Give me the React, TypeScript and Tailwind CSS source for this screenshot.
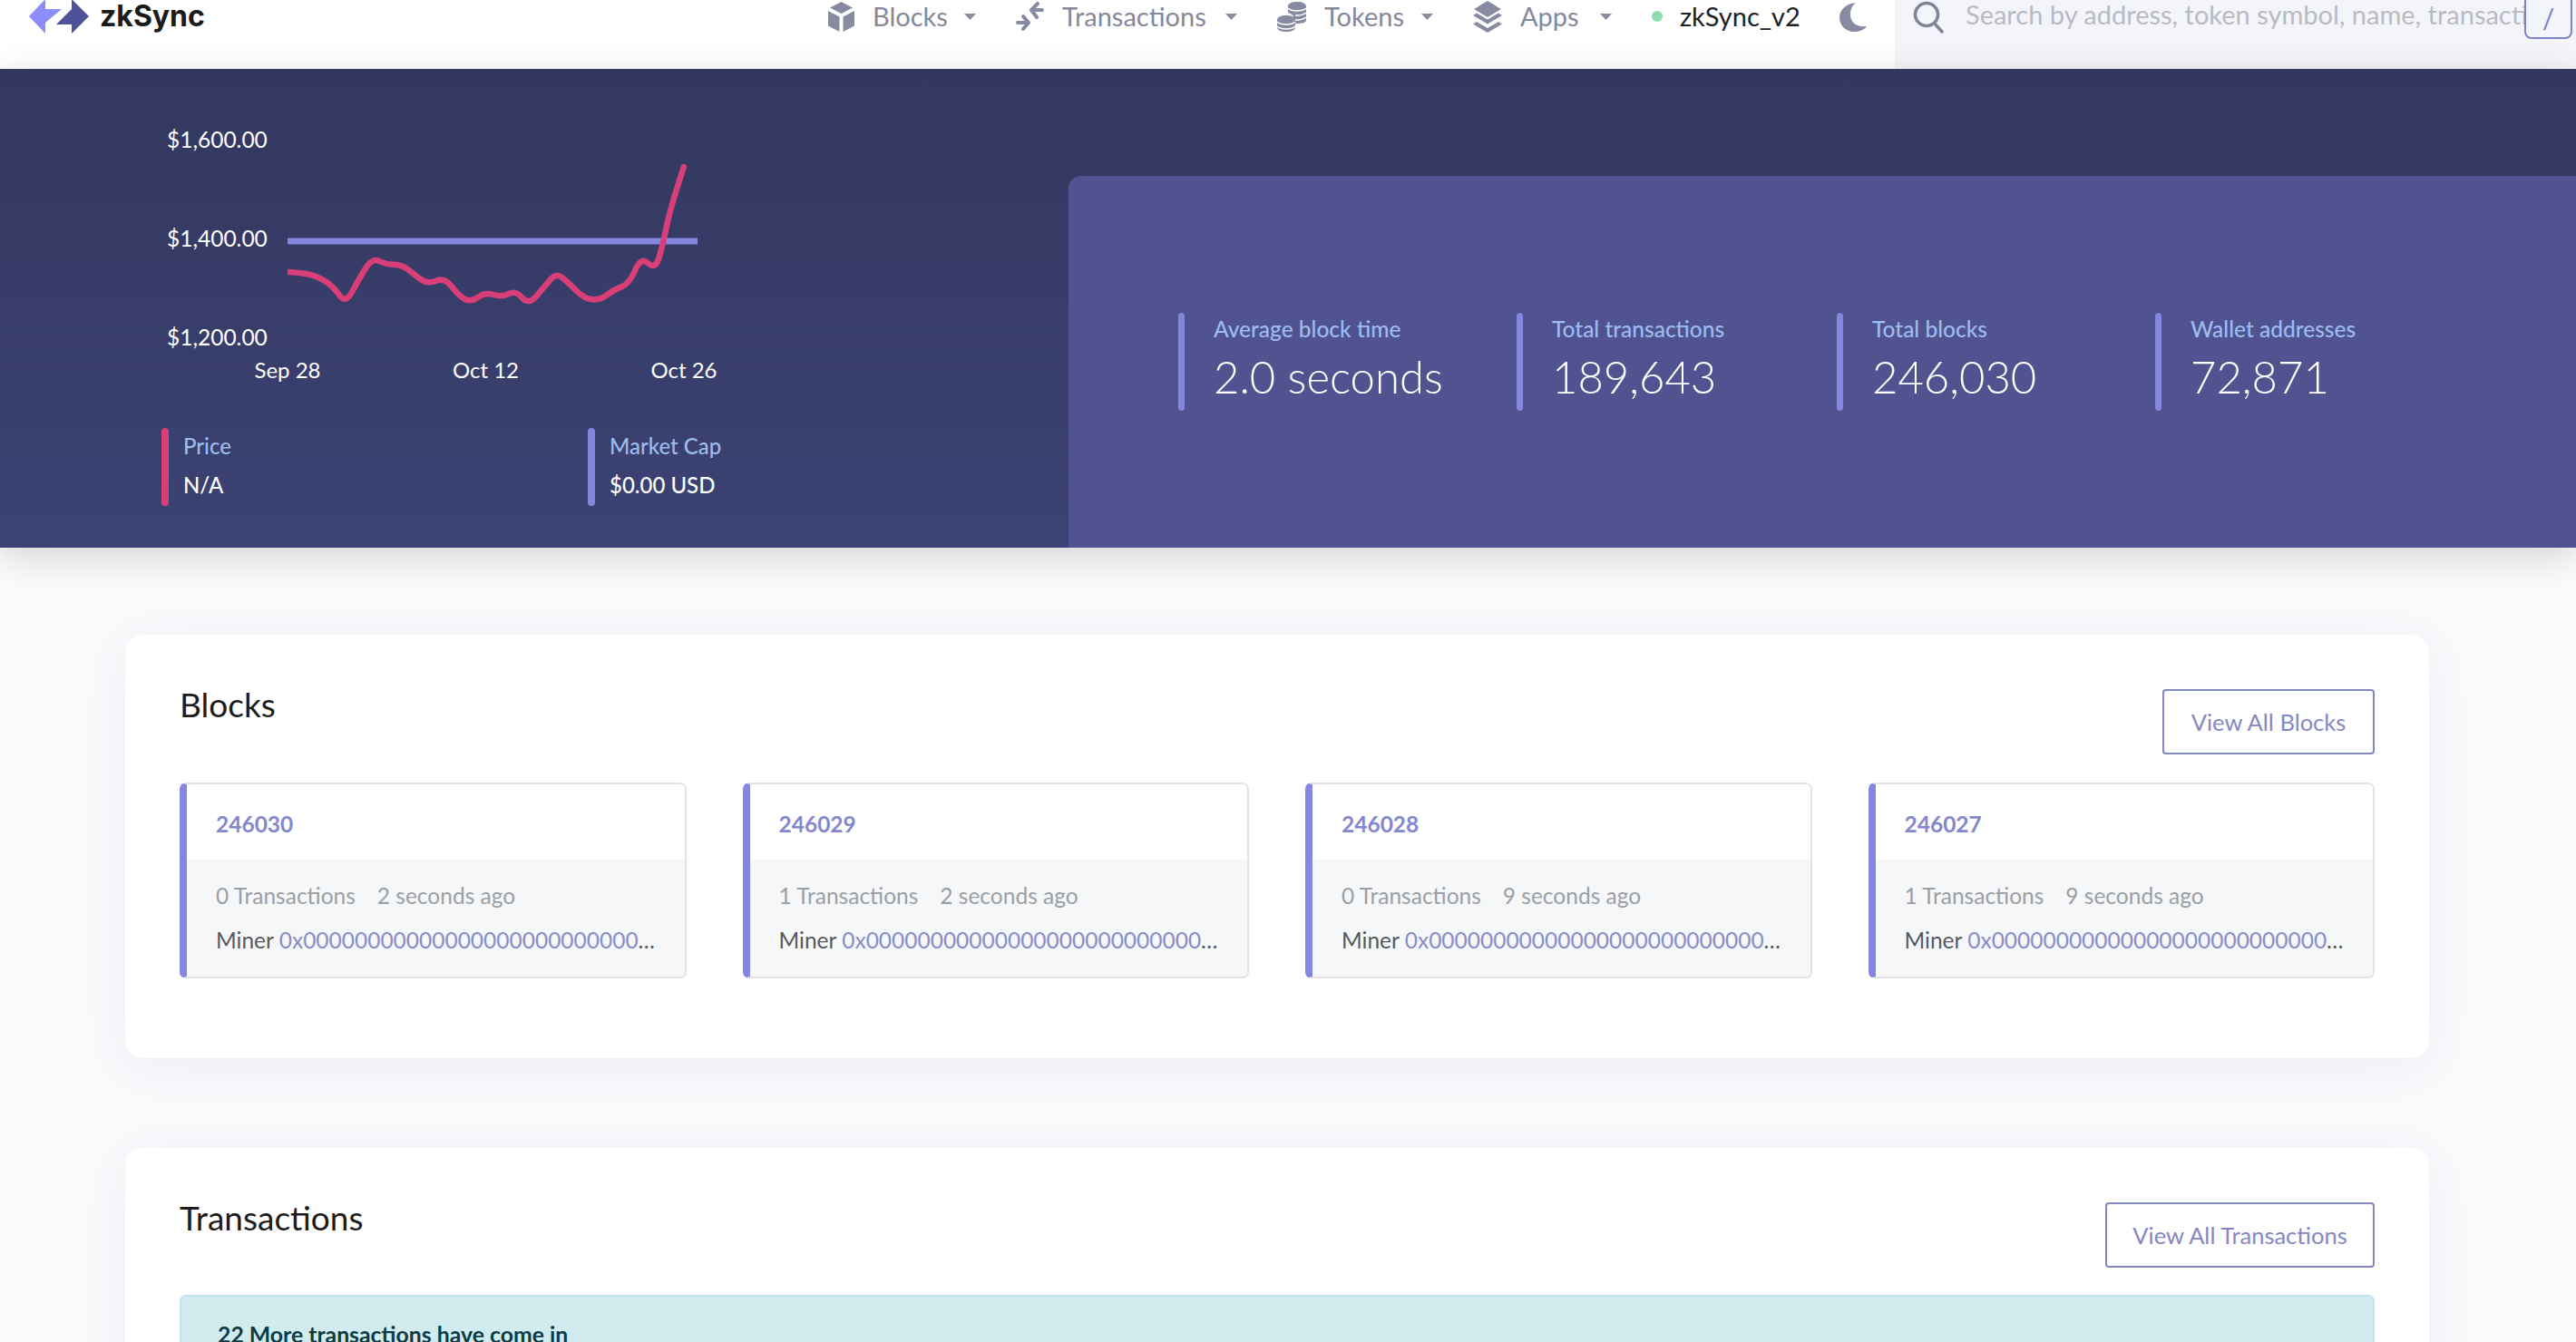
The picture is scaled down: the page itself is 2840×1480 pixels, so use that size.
const font = { fontFamily: 'Lato, "Noto Sans", sans-serif' }

const navItems = [
    { label: 'Blocks', icon: <BlocksIcon />, text: 'w-[81px]', next: 'mr-[44px]' },
    { label: 'Transactions', icon: <TransactionsIcon />, text: 'w-[160px]', next: 'mr-[44px]' },
    { label: 'Tokens', icon: <TokensIcon />, text: 'w-[87px]', next: 'mr-[44px]' },
    { label: 'Apps', icon: <AppsIcon />, text: 'w-[68px]', next: 'mr-[44px]' },
]

const stats = [
    { label: 'Average block time', value: '2.0 seconds' },
    { label: 'Total transactions', value: '189,643' },
    { label: 'Total blocks', value: '246,030' },
    { label: 'Wallet addresses', value: '72,871' },
]

const blocks = [
    { id: '246030', txs: 0, age: '2 seconds ago' },
    { id: '246029', txs: 1, age: '2 seconds ago' },
    { id: '246028', txs: 0, age: '9 seconds ago' },
    { id: '246027', txs: 1, age: '9 seconds ago' },
]

// price line, traced from the chart
const tracedPoints = [
    [400, 540], [440, 543], [480, 560], [510, 590], [540, 645], [570, 570], [605, 492], [640, 515],
    [680, 515], [720, 560], [745, 579], [785, 558], [820, 620], [850, 640], [885, 606], [925, 624],
    [960, 600], [992, 650], [1030, 590], [1060, 542], [1090, 575], [1130, 629], [1170, 632], [1200, 600],
    [1240, 580], [1270, 488], [1305, 535], [1325, 440], [1340, 340], [1375, 192],
].map(([x, y]) => [x / 2.24 - 177, y / 3 - 18])

const pricePath = tracedPoints.reduce((d, [x, y], i) => {
    if (i === 0) return `M${x} ${y}`
    if (i === tracedPoints.length - 1) return `${d} L${x} ${y}`
    const [nx, ny] = tracedPoints[i + 1]
    return `${d} Q${x} ${y} ${(x + nx) / 2} ${(y + ny) / 2}`
}, '')

function BlocksIcon() {
    return (
        <svg width="29" height="33" viewBox="0 0 29 33" fill="#888aa2">
            <path d="M14.5 0 27 6.5 14.5 13 2 6.5Z" />
            <path d="M0 10 12.5 16.5V33L0 26.5Z" />
            <path d="M29 10 16.500 16.500V33L29 26.500Z" />
        </svg>
    )
}

function TransactionsIcon() {
    return (
        <svg width="31" height="32" viewBox="0 0 31 32" fill="none" stroke="#888aa2" strokeWidth="4" strokeLinecap="round" strokeLinejoin="round">
            <path d="M29 9H18M24 2 17 9l6 8" />
            <path d="M2 23h11M8 16l6 7-6 7" />
        </svg>
    )
}

function TokensIcon() {
    return (
        <svg width="32" height="33" viewBox="0 0 32 33" fill="#888aa2">
            <path d="M12 5c0-3 4-5 10-5s10 2 10 5v15c0 3-4 4-10 4h-4v-7c0-2-2-4-6-5Z" />
            <path d="M0 20c0-3 4-5 10-5s10 2 10 5v8c0 3-4 5-10 5s-10-2-10-5Z" />
            <g fill="none" stroke="#fff" strokeWidth="1.5">
                <path d="M12 7c2 2 5 3 10 3s8-1 10-3M20 15c1 0 8 0 12-3M20 20c4 0 9-1 12-3" />
                <path d="M0 22c2 2 5 3 10 3s8-1 10-3M0 27c2 2 5 3 10 3s8-1 10-3" />
            </g>
        </svg>
    )
}

function AppsIcon() {
    return (
        <svg width="32" height="35" viewBox="0 0 32 35" fill="#888aa2">
            <path d="M16 0 31 9 16 18 1 9Z" />
            <path d="M4 13.500 16 20.500 28 13.500 32 16 16 25.500 0 16Z" />
            <path d="M4 23 16 30 28 23 32 25.500 16 35 0 25.500Z" />
        </svg>
    )
}

function Caret() {
    return (
        <svg width="13" height="7" viewBox="0 0 13 7" fill="#8a8c9c">
            <path d="M0 0h13L6.500 7Z" />
        </svg>
    )
}

function Header() {
    return (
        <header className="flex h-[76px] items-start bg-white">
            <div className="flex h-[36px] items-center pl-[30px]">
                <svg width="70" height="38" viewBox="30 -1 70 38" className="overflow-visible">
                    <path d="M32 18 50 -1V10H68L50 25V37Z" fill="#8c8dfc" />
                    <path d="M98 18 79 -1V10L62 27H79V37Z" fill="#4e529a" />
                </svg>
                <span className="ml-[10px] w-[803px] text-[32px] font-bold leading-[36px] text-[#1b1b1b]" style={{ fontFamily: 'Inter, sans-serif' }}>
                    zkSync
                </span>
            </div>
            <nav className="flex h-[36px] items-center text-[29px] text-[#85889a]">
                {navItems.map((item) => (
                    <div key={item.label} className={`flex items-center ${item.next}`}>
                        {item.icon}
                        <span className={`ml-[20px] whitespace-nowrap ${item.text}`}>{item.label}</span>
                        <span className="ml-[20px] flex">
                            <Caret />
                        </span>
                    </div>
                ))}
                <span className="h-[12px] w-[12px] rounded-full bg-[#8fdcae]" />
                <span className="ml-[19px] w-[131px] whitespace-nowrap text-[#202124]">zkSync_v2</span>
                <svg width="32" height="33" viewBox="0 0 32 33" fill="#888aa2" className="ml-[44px]">
                    <path d="M19 1C8 2 1 9 1 17c0 9 7 16 16 16 6 0 11-2 14-6-11 1-18-4-18-13 0-6 2-10 6-13Z" />
                </svg>
            </nav>
            <div className="ml-[30px] flex h-[76px] flex-1 items-start overflow-hidden bg-[#f4f5fa] pl-[20px]">
                <svg width="34" height="36" viewBox="0 0 34 36" fill="none" stroke="#828499" strokeWidth="3.500" strokeLinecap="round" className="mt-[1px] shrink-0">
                    <circle cx="15" cy="15" r="12.500" />
                    <path d="M24 25 32 34" />
                </svg>
                <span className="ml-[24px] w-[616px] shrink-0 overflow-hidden whitespace-nowrap text-[29px] leading-[32px] text-[#b9bac2]">
                    Search by address, token symbol, name, transaction
                </span>
                <span className="-mt-[10px] flex h-[53px] w-[53px] shrink-0 items-center justify-center rounded-[8px] border-2 border-[#7f82c8] pt-[8px] text-[30px] text-[#7f82c8]">
                    /
                </span>
            </div>
        </header>
    )
}

function Chart() {
    return (
        <div className="flex">
            <div className="flex h-[250px] w-[112px] flex-col justify-between whitespace-nowrap text-[24.500px] leading-[32px] text-white">
                <span>$1,600.00</span>
                <span>$1,400.00</span>
                <span>$1,200.00</span>
            </div>
            <svg width="500" height="250" viewBox="0 0 500 250" fill="none" className="ml-[21px]">
                <path d="M0 128H452" stroke="#8486e0" strokeWidth="7" />
                <path d={pricePath} stroke="#d83f78" strokeWidth="6.500" strokeLinejoin="round" strokeLinecap="round" />
            </svg>
        </div>
    )
}

function Hero() {
    return (
        <section className="relative flex h-[528px] bg-linear-to-b from-[#33385f] to-[#3c4273] shadow-[0_10px_40px_rgba(0,0,0,0.16)]">
            <div className="w-[1178px] shrink-0 pt-[62px]">
                <div className="pl-[184px]">
                    <Chart />
                </div>
                <div className="ml-[267px] mt-[4px] flex w-[537px] justify-between text-[24px] leading-[32px] text-white">
                    <span className="w-[100px] text-center">Sep 28</span>
                    <span className="w-[100px] text-center">Oct 12</span>
                    <span className="w-[100px] text-center">Oct 26</span>
                </div>
                <div className="ml-[178px] mt-[48px] flex">
                    <Legend color="bg-[#d83f78]" label="Price" value="N/A" width="w-[470px]" />
                    <Legend color="bg-[#8486e0]" label="Market Cap" value="$0.00 USD" width="w-[200px]" />
                </div>
            </div>
            <div className="mt-[118px] flex flex-1 items-center rounded-tl-[14px] bg-[#50538f] pl-[121px]">
                <div className="grid grid-cols-[373px_353px_351px_auto]">
                    {stats.map((stat) => (
                        <div key={stat.label} className="flex h-[108px]">
                            <div className="w-[7px] rounded-full bg-[#8486e0]" />
                            <div className="ml-[32px] whitespace-nowrap pt-[3px]">
                                <div className="text-[24.500px] font-medium leading-[30px] text-[#9dbcf0]">{stat.label}</div>
                                <div className="mt-[7px] text-[49px] font-light leading-[60px] text-white">{stat.value}</div>
                            </div>
                        </div>
                    ))}
                </div>
            </div>
        </section>
    )
}

function Legend({ color, label, value, width }: { color: string; label: string; value: string; width: string }) {
    return (
        <div className={`flex h-[86px] ${width}`}>
            <div className={`w-[8px] rounded-full ${color}`} />
            <div className="ml-[16px] text-[24px] font-medium leading-[30px]">
                <div className="mt-[5px] text-[#9dbcf0]">{label}</div>
                <div className="mt-[13px] text-white">{value}</div>
            </div>
        </div>
    )
}

function BlockCard({ id, txs, age }: { id: string; txs: number; age: string }) {
    return (
        <div className="h-[216px] overflow-hidden rounded-[7px] border-2 border-l-[8px] border-[#e2e3e5] border-l-[#8486e0]">
            <div className="flex h-[83px] items-center bg-white pl-[32px] pt-[6px] text-[24.500px] font-bold text-[#8587ce]">{id}</div>
            <div className="h-[131px] bg-[#f6f7f8] pl-[32px] pr-[28px] pt-[24px] text-[24.500px] leading-[32px]">
                <div className="whitespace-nowrap text-[#9a9fa6]">
                    {txs} Transactions<span className="ml-[24px]">{age}</span>
                </div>
                <div className="mt-[17px] truncate text-[#55595e]">
                    Miner <span className="text-[#8a8cc8]">0x0000000000000000000000000000000000000000</span>
                </div>
            </div>
        </div>
    )
}

function SectionHead({ title, action, width }: { title: string; action: string; width: string }) {
    return (
        <div className="flex items-start justify-between">
            <h2 className="text-[37px] leading-[34px] text-[#1c1c1c]">{title}</h2>
            <button className={`h-[72px] rounded-[4px] border-2 border-[#8587c0] text-[25.500px] text-[#8587c4] ${width}`}>{action}</button>
        </div>
    )
}

export default function App() {
    return (
        <div className="h-[1480px] overflow-hidden bg-[#fbfbfd]" style={font}>
            <Header />
            <Hero />
            <main className="pl-[138px] pr-[162px] pt-[96px]">
                <section className="h-[467px] rounded-[20px] bg-white px-[60px] pt-[60px] shadow-[0_10px_60px_rgba(90,90,170,0.1)]">
                    <SectionHead title="Blocks" action="View All Blocks" width="w-[234px]" />
                    <div className="mt-[31px] grid grid-cols-4 gap-[62px]">
                        {blocks.map((block) => (
                            <BlockCard key={block.id} {...block} />
                        ))}
                    </div>
                </section>
                <section className="mt-[99px] h-[400px] rounded-[20px] bg-white px-[60px] pt-[60px] shadow-[0_10px_60px_rgba(90,90,170,0.1)]">
                    <SectionHead title="Transactions" action="View All Transactions" width="w-[297px]" />
                    <div className="mt-[30px] h-[120px] rounded-[7px] border-2 border-[#bee5eb] bg-[#d2ebef] px-[40px] pt-[26px] text-[24.800px] font-bold leading-[32px] text-[#0c3c44]">
                        22 More transactions have come in
                    </div>
                </section>
            </main>
        </div>
    )
}
